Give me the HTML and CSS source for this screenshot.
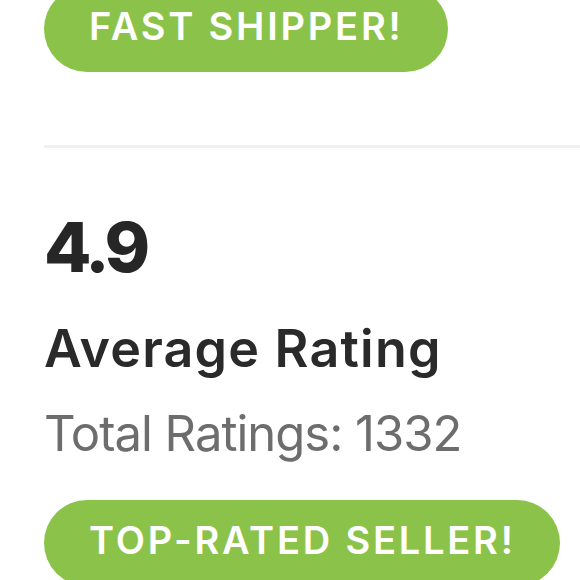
FILE: index.html
```html
<!DOCTYPE html>
<html>
<head>
<meta charset="utf-8">
<link rel="stylesheet" href="styles.css">
</head>
<body>
<div class="page">
  <div class="badge badge-top">FAST SHIPPER!</div>
  <div class="divider"></div>
  <div class="stats">
    <div class="score">4.9</div>
    <div class="label">Average Rating</div>
    <div class="total">Total Ratings: 1332</div>
  </div>
  <div class="badge badge-bottom">TOP-RATED SELLER!</div>
</div>
</body>
</html>
```
FILE: styles.css
```css
html, body {
  margin: 0;
  padding: 0;
  background: #ffffff;
  overflow: hidden;
}
body {
  font-family: Inter, "Open Sans", sans-serif;
}
.page {
  padding-left: 44px;
  display: flex;
  flex-direction: column;
  align-items: flex-start;
}
.badge {
  box-sizing: border-box;
  background: #8bc34a;
  color: #ffffff;
  border-radius: 999px;
  height: 86px;
  line-height: 81px;
  padding: 0 44px 5px 45px;
  font-size: 38px;
  font-weight: 600;
  letter-spacing: 2.8px;
  white-space: nowrap;
}
.badge-top {
  margin-top: -14px;
}
.divider {
  align-self: stretch;
  height: 3px;
  background: #f0f0f0;
  margin-top: 73px;
}
.stats {
  display: flex;
  flex-direction: column;
  margin-top: 57px;
}
.score {
  font-size: 69px;
  font-weight: 800;
  line-height: 84px;
  letter-spacing: -4px;
  color: #262626;
}
.label {
  font-size: 52px;
  font-weight: 600;
  line-height: 64px;
  letter-spacing: 1.2px;
  color: #2a2a2a;
  margin-top: 28px;
}
.total {
  font-size: 49px;
  font-weight: 400;
  line-height: 60px;
  letter-spacing: -1px;
  color: #6d6d6d;
  margin-top: 23px;
}
.badge-bottom {
  margin-top: 36px;
}
```
